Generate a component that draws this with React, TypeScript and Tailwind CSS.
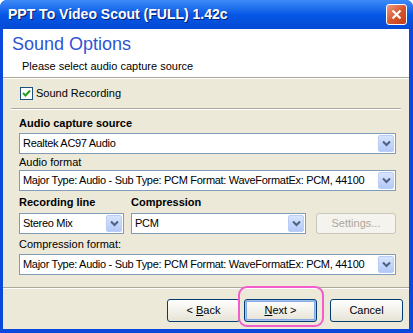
import React from "react";

const font = { fontFamily: '"Liberation Sans", Arial, sans-serif' };

function Chevron() {
  return (
    <svg width="9" height="7" viewBox="0 0 9 7">
      <path d="M1 1.5 L4.5 5 L8 1.5" fill="none" stroke="#4d6185" strokeWidth="2" />
    </svg>
  );
}

function Combo({ value, className = "" }: { value: string; className?: string }) {
  return (
    <div className={`flex h-[21px] items-center border border-[#7f9db9] bg-white pl-[3px] ${className}`}>
      <span className="flex-1 overflow-hidden whitespace-nowrap text-[11px] leading-[13px] tracking-[-0.3px] text-black">{value}</span>
      <div className="m-[1px] flex h-[17px] w-[16px] items-center justify-center rounded-[2px] border border-[#b9cdf6] bg-gradient-to-b from-[#d8e4fd] to-[#b3c9f7]">
        <Chevron />
      </div>
    </div>
  );
}

function Button({ label, accel, rest, def = false }: { label?: string; accel?: string; rest?: string; def?: boolean }) {
  return (
    <div
      className={`flex h-[23px] w-[73px] items-center justify-center whitespace-pre rounded-[3px] border border-[#003c74] bg-gradient-to-b from-white to-[#e6e3d6] text-[11px] text-black ${
        def ? "shadow-[inset_0_0_0_1px_#a6c2ef,inset_0_0_0_2px_#86a7e0]" : ""
      }`}
    >
      {label && <span>{label}</span>}
      {accel && <span className="underline">{accel}</span>}
      {rest && <span>{rest}</span>}
    </div>
  );
}

export default function App() {
  return (
    <div className="flex h-[333px] w-[413px] flex-col overflow-hidden rounded-t-[7px] bg-[#0a49dc]" style={font}>
      {/* title bar */}
      <div className="flex h-[29px] items-center bg-gradient-to-b from-[#3d8bf8] via-[#0658e6] to-[#0449d4] pl-[8px] pr-[6px]">
        <span className="flex-1 text-[14px] font-bold text-white [text-shadow:1px_1px_#0a1e6e]">
          PPT To Video Scout (FULL) 1.42c
        </span>
        <div className="flex h-[21px] w-[21px] items-center justify-center rounded-[3px] border border-white bg-gradient-to-br from-[#eb9a7e] via-[#d9572f] to-[#c13c17]">
          <svg width="11" height="11" viewBox="0 0 11 11">
            <path d="M1.5 1.5 L9.5 9.5 M9.5 1.5 L1.5 9.5" stroke="white" strokeWidth="2.2" />
          </svg>
        </div>
      </div>

      <div className="ml-[3px] mr-[4px] flex flex-1 flex-col">
        {/* header */}
        <div className="h-[48px] bg-white">
          <div className="pl-[9px] pt-[4px] text-[18px] leading-[22px] text-[#2f55d4]">Sound Options</div>
          <div className="pl-[19px] pt-[5px] text-[11px] leading-[13px] text-black">Please select audio capture source</div>
        </div>
        <div className="h-px bg-[#aca899]" />
        <div className="h-px bg-white" />

        {/* body */}
        <div className="flex flex-1 flex-col bg-[#ece9d8] text-[11px] leading-[13px] text-black">
          <div className="mt-[8px] flex items-center pl-[17px]">
            <div className="flex h-[13px] w-[13px] items-center justify-center border border-[#1c5180] bg-white">
              <svg width="9" height="9" viewBox="0 0 9 9">
                <path d="M1 4 L3.5 6.5 L8 1.5" fill="none" stroke="#21a121" strokeWidth="2" />
              </svg>
            </div>
            <span className="ml-[3px]">Sound Recording</span>
          </div>

          <div className="mx-[8px] mt-[8px]">
            <div className="h-px bg-[#aca899]" />
            <div className="h-px bg-white" />
          </div>

          <div className="flex flex-col pl-[16px] pr-[13px]">
            <div className="mt-[7px] font-bold">Audio capture source</div>
            <Combo value="Realtek AC97 Audio" className="mt-[3px]" />
            <div className="mt-[2px]">Audio format</div>
            <Combo value="Major Type: Audio - Sub Type: PCM Format: WaveFormatEx: PCM, 44100" className="mt-[1px]" />

            <div className="mt-[5px] flex gap-[8px] font-bold">
              <div className="w-[104px]">Recording line</div>
              <div>Compression</div>
            </div>
            <div className="mt-[4px] flex items-center">
              <Combo value="Stereo Mix" className="w-[105px]" />
              <Combo value="PCM" className="ml-[7px] w-[175px]" />
              <div className="ml-[10px] flex h-[21px] flex-1 items-center justify-center rounded-[3px] border border-[#c9c7ba] bg-[#f4f3ee] text-[#aca899]">
                Settings...
              </div>
            </div>

            <div className="mt-[4px]">Compression format:</div>
            <Combo value="Major Type: Audio - Sub Type: PCM Format: WaveFormatEx: PCM, 44100" className="mt-[3px]" />
          </div>

          <div className="mt-[12px] h-px bg-[#aca899]" />
          <div className="h-px bg-white" />

          <div className="mt-[10px] flex items-center pl-[164px]">
            <Button label={"<\u00a0"} accel="B" rest="ack" />
            <div className="relative ml-[4px]">
              <Button accel="N" rest="ext >" def />
              <div className="absolute left-[-6px] top-[-13px] h-[41px] w-[86px] rounded-[9px] border-2 border-[#f25ccc]" />
            </div>
            <div className="ml-[13px]">
              <Button label="Cancel" />
            </div>
          </div>
        </div>
      </div>
      <div className="h-[4px]" />
    </div>
  );
}
